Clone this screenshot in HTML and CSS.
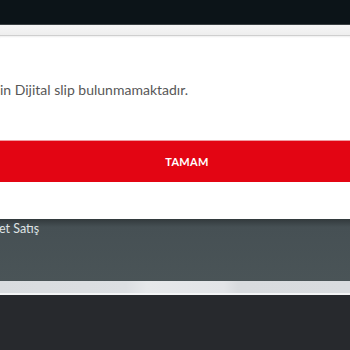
FILE: index.html
```html
<!DOCTYPE html>
<html>
<head>
<meta charset="utf-8">
<link rel="stylesheet" href="styles.css">
</head>
<body>
<div class="page">
  <div class="topbar"></div>
  <div class="topline"></div>
  <div class="strip"></div>
  <div class="dialog">
    <p class="message">in Dijital slip bulunmamaktadır.</p>
    <button class="ok">TAMAM</button>
  </div>
  <div class="panel"><span class="panel-title">et Satış</span></div>
  <div class="lightbar"></div>
  <div class="whiteline"></div>
  <div class="bottom"></div>
</div>
</body>
</html>
```
FILE: styles.css
```css
html, body { margin: 0; padding: 0; }
body { width: 350px; height: 350px; overflow: hidden; font-family: "Lato", "Noto Sans", sans-serif; }
.page { display: flex; flex-direction: column; height: 350px; }
.topbar { height: 24px; background: #0c1418; }
.topline { height: 1px; background: #3b4144; }
.strip { height: 10px; background: linear-gradient(#f6f6f6, #eeeeee); border-bottom: 1px solid #cfcfcf; }
.dialog { background: #fff; height: 183px; display: flex; flex-direction: column; box-shadow: inset 0 2px 2px -1px #eee; }
.message { margin: 45px 0 0 0; padding-left: 0; font-size: 14px; color: #575757; line-height: 18px; height: 59px; }
.ok { border: 0; border-top: 1px solid #f09aa0; height: 42px; background: #e30513; color: #fff; font-family: "Lato", sans-serif; font-weight: 700; font-size: 11px; letter-spacing: 0.3px; padding: 0 0 0 24px; }
.panel { height: 62px; background: linear-gradient(#32393c 0px, #465054 8px, #4a5457 100%); color: #dfe3e4; font-size: 12.5px; }
.panel-title { display: block; margin-top: 2px; margin-left: -1px; }
.lightbar { height: 12px; background: linear-gradient(90deg, #d9dcdf 0%, #dcdfe2 36%, #e6e8ea 42%, #e2e4e7 64%, #d8dbde 68%, #d9dcdf 100%); }
.whiteline { height: 2px; background: #f4f5f6; }
.bottom { flex: 1; background: #27292d; }
```
